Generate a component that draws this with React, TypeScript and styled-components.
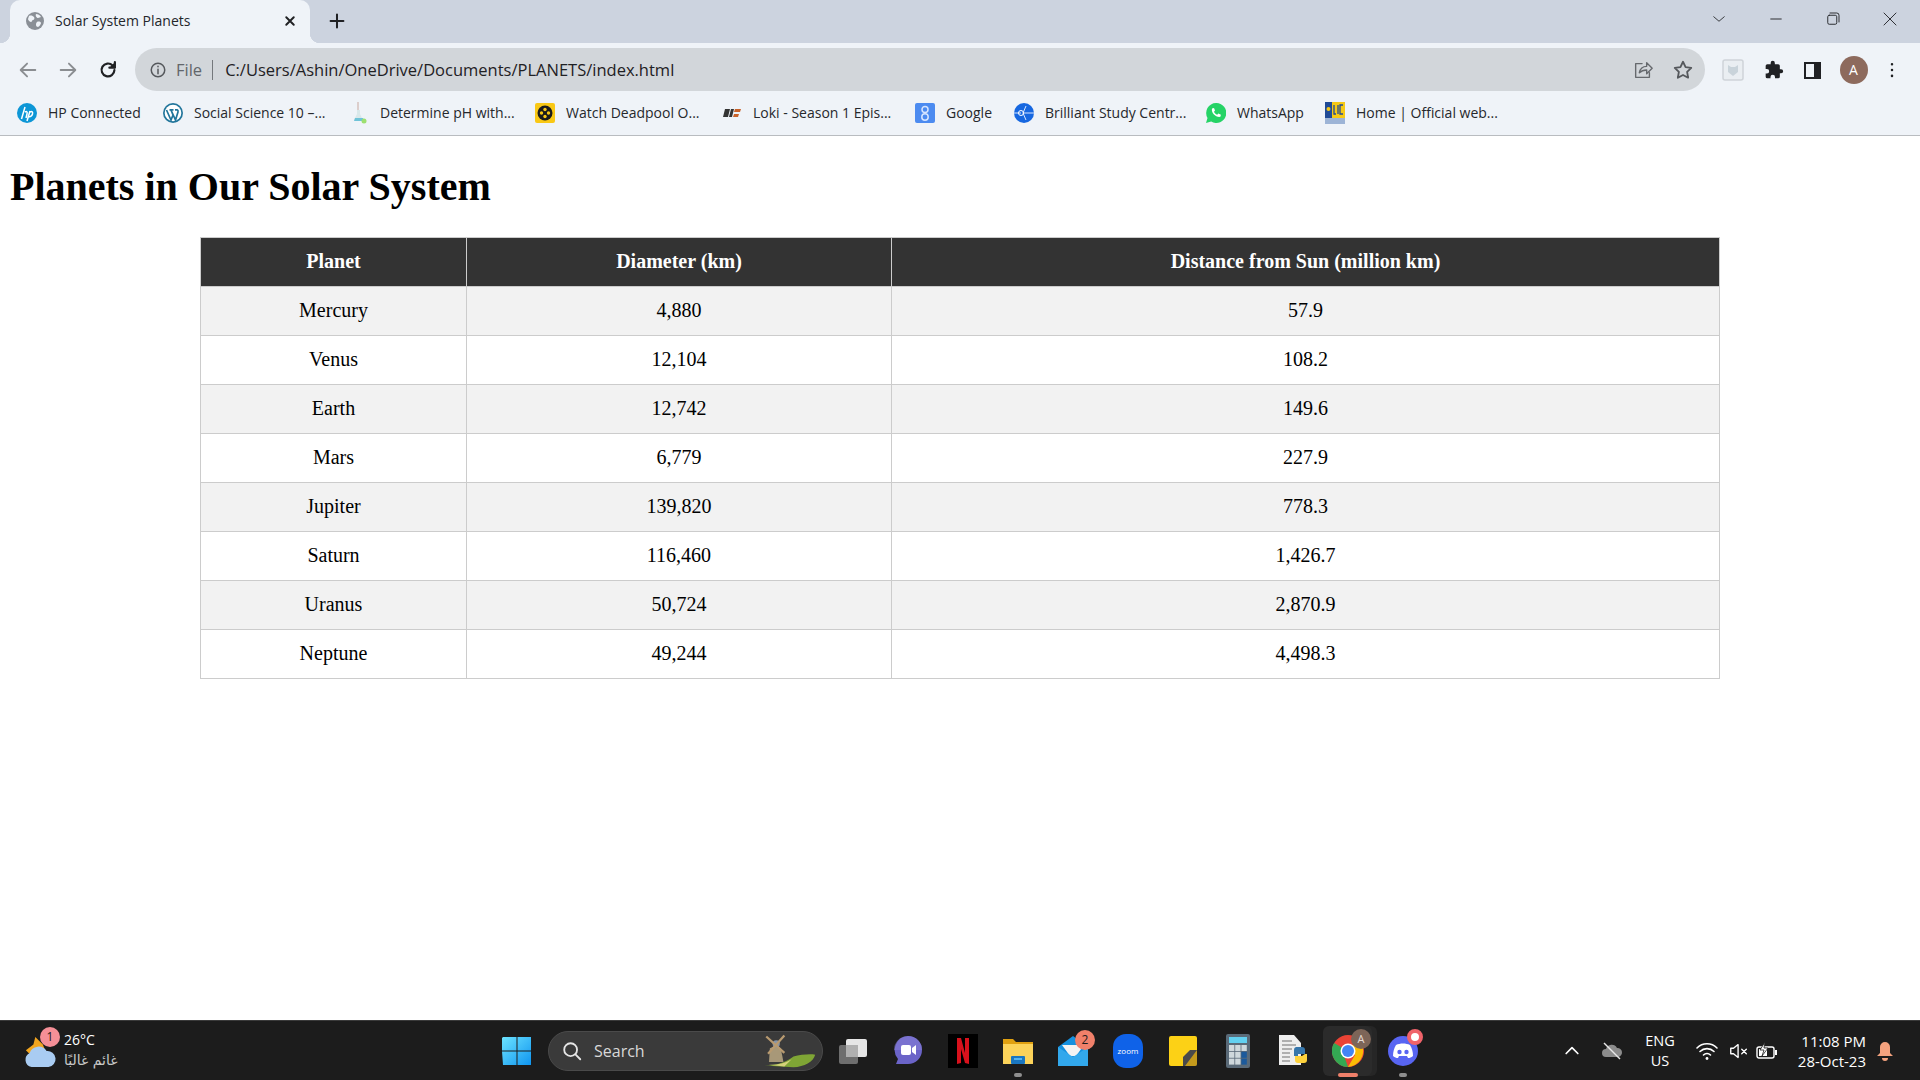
import React from "react";
import styled, { createGlobalStyle } from "styled-components";

const GlobalStyle = createGlobalStyle`
	html, body {
		margin: 0;
		padding: 0;
		background: #ffffff;
	}
`;

const uiFont = `"Open Sans", "Noto Sans", sans-serif`;

const Page = styled.div`
	width: 1920px;
	height: 1080px;
	display: flex;
	flex-direction: column;
	overflow: hidden;
	font-family: ${uiFont};
`;

const TabStrip = styled.div`
	height: 43px;
	flex: none;
	background: #ccd3df;
	display: flex;
	align-items: flex-end;
	padding-left: 10px;
`;

const Tab = styled.div`
	position: relative;
	width: 300px;
	height: 43px;
	box-sizing: border-box;
	background: #eff3f8;
	border-radius: 10px 10px 0 0;
	display: flex;
	align-items: center;
	padding: 0 11px 2px 16px;
	gap: 11px;
	font-size: 14px;
	color: #23262b;

	&::before,
	&::after {
		content: "";
		position: absolute;
		bottom: 0;
		width: 10px;
		height: 10px;
	}

	&::before {
		left: -10px;
		background: radial-gradient(circle at 0 0, transparent 10px, #eff3f8 10.5px);
	}

	&::after {
		right: -10px;
		background: radial-gradient(circle at 100% 0, transparent 10px, #eff3f8 10.5px);
	}
`;

const TabTitle = styled.span`
	flex: 1;
	white-space: nowrap;
`;

const NewTab = styled.div`
	width: 54px;
	height: 43px;
	display: flex;
	align-items: center;
	justify-content: center;
	padding-bottom: 2px;
	box-sizing: border-box;
`;

const WindowControls = styled.div`
	margin-left: auto;
	height: 43px;
	display: flex;
	align-items: center;
	padding: 0 2px 5px 0;
	box-sizing: border-box;
`;

const WindowButton = styled.div<{ $w: number }>`
	width: ${({ $w }) => $w}px;
	display: flex;
	justify-content: center;
`;

const Toolbar = styled.div`
	height: 48px;
	flex: none;
	background: #eff3f8;
	display: flex;
	align-items: flex-start;
	padding-top: 5px;
	box-sizing: border-box;
`;

const NavGroup = styled.div`
	width: 135px;
	height: 43px;
	flex: none;
	display: flex;
	align-items: center;
	padding-left: 8px;
	box-sizing: border-box;
`;

const NavButton = styled.div`
	width: 40px;
	display: flex;
	justify-content: center;
`;

const AddressPill = styled.div`
	width: 1570px;
	height: 43px;
	flex: none;
	background: #d2d6da;
	border-radius: 22px;
	display: flex;
	align-items: center;
	padding: 0 11px 0 14px;
	box-sizing: border-box;
	font-size: 16.5px;
	color: #1f2124;
`;

const FileLabel = styled.span`
	color: #62666b;
	margin-left: 9px;
	padding-right: 10px;
	border-right: 1px solid #74787c;
	line-height: 20px;
`;

const Url = styled.span`
	margin-left: 12px;
	flex: 1;
	white-space: nowrap;
`;

const PillIcons = styled.div`
	display: flex;
	align-items: center;
	gap: 18px;
`;

const ExtensionIcons = styled.div`
	flex: 1;
	height: 43px;
	display: flex;
	align-items: center;
	padding-left: 17px;
	gap: 19.5px;
`;

const Avatar = styled.div`
	width: 28px;
	height: 28px;
	margin-left: -3px;
	border-radius: 50%;
	background: #8d6a5d;
	color: #ffffff;
	font-size: 14px;
	display: flex;
	align-items: center;
	justify-content: center;
`;

const MenuDots = styled.div`
	display: flex;
	margin-left: -5px;
`;

const BookmarkBar = styled.div`
	height: 45px;
	flex: none;
	background: #eff3f8;
	border-bottom: 1px solid #b9bcc0;
	box-sizing: border-box;
	display: flex;
	align-items: center;
	padding: 0 0 1px 17px;
	font-size: 14px;
	color: #26282c;
`;

const Bookmark = styled.div<{ $w: number }>`
	width: ${({ $w }) => $w}px;
	flex: none;
	display: flex;
	align-items: center;
	gap: 11px;
	white-space: nowrap;
`;

const Content = styled.main`
	flex: 1;
	padding: 28px 10px 0;
	background: #ffffff;
	font-family: "Liberation Serif", "Times New Roman", serif;
	color: #000000;
`;

const Heading = styled.h1`
	margin: 0 0 27px;
	font-size: 40px;
	line-height: 46px;
	font-weight: 700;
`;

const PlanetTable = styled.table`
	width: 1519px;
	margin: 0 0 0 190px;
	border-collapse: collapse;
	table-layout: fixed;
	font-size: 20px;
`;

const Column = styled.col<{ $w: number }>`
	width: ${({ $w }) => $w}px;
`;

const HeadCell = styled.th`
	height: 49px;
	padding: 0 0 2px;
	background: #333333;
	color: #ffffff;
	border: 1px solid #cccccc;
	text-align: center;
	font-weight: 700;
	box-sizing: border-box;
`;

const BodyRow = styled.tr`
	&:nth-child(odd) {
		background: #f2f2f2;
	}
`;

const BodyCell = styled.td`
	height: 49px;
	padding: 0 0 2px;
	border: 1px solid #cccccc;
	text-align: center;
	box-sizing: border-box;
`;

const Taskbar = styled.footer`
	height: 60px;
	flex: none;
	box-sizing: border-box;
	background: #1c1c1c;
	border-top: 1px solid #3a3a3a;
	display: flex;
	align-items: center;
	color: #ffffff;
`;

const Weather = styled.div`
	width: 489px;
	flex: none;
	display: flex;
	align-items: center;
	padding-left: 22px;
	gap: 4px;
	box-sizing: border-box;
`;

const WeatherIcon = styled.div`
	position: relative;
	width: 38px;
	height: 44px;
`;

const Badge = styled.div<{ $bg: string; $size: number }>`
	position: absolute;
	width: ${({ $size }) => $size}px;
	height: ${({ $size }) => $size}px;
	border-radius: 50%;
	background: ${({ $bg }) => $bg};
	color: #1c1c1c;
	font-size: 12px;
	line-height: ${({ $size }) => $size}px;
	text-align: center;
	top: -2px;
	right: 0;
`;

const WeatherText = styled.div`
	font-size: 14px;
	line-height: 20px;
	padding-bottom: 2px;
`;

const WeatherSub = styled.div`
	color: #c8c8c8;
	font-family: "DejaVu Sans", sans-serif;
	font-size: 14px;
`;

const TaskSlot = styled.div`
	position: relative;
	width: 55px;
	height: 59px;
	flex: none;
	display: flex;
	align-items: center;
	justify-content: center;
`;

const ActiveBack = styled.div`
	position: absolute;
	top: 5px;
	bottom: 4px;
	left: 3px;
	right: 3px;
	border-radius: 6px;
	background: #2b2b2b;
	box-shadow: 5px 0 0 #262626;
`;

const RunDot = styled.div<{ $wide?: boolean }>`
	position: absolute;
	bottom: 3px;
	left: 50%;
	transform: translateX(-50%);
	height: 4px;
	border-radius: 2px;
	width: ${({ $wide }) => ($wide ? 20 : 8)}px;
	background: ${({ $wide }) => ($wide ? "#f0806a" : "#8f8f8f")};
`;

const SearchBox = styled.div`
	width: 275px;
	height: 40px;
	flex: none;
	box-sizing: border-box;
	margin: 0 2px 0 4px;
	background: #3a3a3a;
	border: 1px solid #4a4a4a;
	border-radius: 20px;
	display: flex;
	align-items: center;
	padding: 0 5px 0 12px;
	gap: 11px;
	font-size: 16px;
	color: #d8d8d8;
`;

const SearchLabel = styled.span`
	flex: 1;
`;

const Tray = styled.div`
	margin-left: auto;
	padding-right: 16px;
	display: flex;
	align-items: center;
	height: 59px;
`;

const TrayIcon = styled.div<{ $w: number }>`
	width: ${({ $w }) => $w}px;
	flex: none;
	display: flex;
	justify-content: center;
`;

const Lang = styled.div`
	width: 58px;
	text-align: center;
	font-size: 14.5px;
	line-height: 20px;
`;

const Clock = styled.div`
	width: 84px;
	text-align: right;
	font-size: 15px;
	line-height: 20px;
	white-space: nowrap;
`;

const ProfileOverlay = styled.div`
	position: absolute;
	top: 8px;
	right: 4px;
	width: 20px;
	height: 20px;
	border-radius: 50%;
	background: #7d6558;
	color: #e6dcd6;
	font-size: 11px;
	line-height: 20px;
	text-align: center;
`;

const ChromeWrap = styled.div`
	position: relative;
	display: flex;
`;

const MailBadge = styled(Badge)`
	top: 9px;
	right: 5px;
`;

const DiscordBadge = styled(Badge)`
	top: 8px;
	right: 7px;
	border: 4px solid #f0636a;
	background: #ffffff;
	box-sizing: border-box;
`;

const WeatherArtBox = styled.svg`
	position: absolute;
	left: 0;
	top: 8px;
`;

const planets = [
	["Mercury", "4,880", "57.9"],
	["Venus", "12,104", "108.2"],
	["Earth", "12,742", "149.6"],
	["Mars", "6,779", "227.9"],
	["Jupiter", "139,820", "778.3"],
	["Saturn", "116,460", "1,426.7"],
	["Uranus", "50,724", "2,870.9"],
	["Neptune", "49,244", "4,498.3"],
];

const Stroke: React.FC<{ size?: number; color?: string; width?: number; children: React.ReactNode }> = ({
	size = 20,
	color = "#5f6368",
	width = 2,
	children,
}) => (
	<svg width={size} height={size} viewBox="0 0 24 24" fill="none" stroke={color} strokeWidth={width} strokeLinecap="round" strokeLinejoin="round">
		{children}
	</svg>
);

const GlobeIcon = () => (
	<svg width="18" height="18" viewBox="0 0 18 18">
		<circle cx="9" cy="9" r="9" fill="#8a8f96" />
		<path d="M3 4c2-1 4 0 5 1s0 3-1 3-1 2-2 2-3-2-3-3zM11 10c2-1 4 0 4 1s-2 4-3 4-2-1-2-2 0-2 1-3zM10 2c2 0 4 1 5 3l-3 1c-1 0-3-2-2-4z" fill="#eff3f8" />
	</svg>
);

const Puzzle = () => (
	<svg width="20" height="20" viewBox="0 0 24 24" fill="#202124">
		<path d="M20.5 11H19V7a2 2 0 0 0-2-2h-4V3.500a2.500 2.500 0 0 0-5 0V5H4a2 2 0 0 0-2 2v3.800h1.500a2.700 2.700 0 0 1 0 5.400H2V20a2 2 0 0 0 2 2h3.800v-1.500a2.700 2.700 0 0 1 5.400 0V22H17a2 2 0 0 0 2-2v-4h1.500a2.500 2.500 0 0 0 0-5z" />
	</svg>
);

const HpLogo = () => (
	<svg width="20" height="20" viewBox="0 0 20 20">
		<circle cx="10" cy="10" r="10" fill="#0d96d6" />
		<path d="M8 4 4.500 16M8 9c2-1 2.500 0 2 2l-1 4M13 8l-3 10M13 9c2-1 3 0 2.500 2s-2 3-4 2.500" stroke="#fff" strokeWidth="1.500" fill="none" />
	</svg>
);

const WpLogo = () => (
	<svg width="20" height="20" viewBox="0 0 20 20">
		<circle cx="10" cy="10" r="10" fill="#21759b" />
		<circle cx="10" cy="10" r="8.300" fill="#ffffff" />
		<path d="M3.500 7 8 17l2-5-2-5M8 7l4.500 10 2.500-8c.4-1.200-.3-2-1-2.500M6.500 6.800h4M12 6.800h2" stroke="#21759b" strokeWidth="1.700" fill="none" />
	</svg>
);

const FlaskLogo = () => (
	<svg width="20" height="24" viewBox="0 0 20 24">
		<path d="M9 1v8" stroke="#c9a9a0" strokeWidth="1" />
		<path d="M8 9h3v4l3 6H5l3-6z" fill="#d9e8ea" />
		<path d="M6 17h8l1 3H5z" fill="#6fc3d8" />
		<circle cx="15" cy="20" r="2.500" fill="#9de070" />
	</svg>
);

const ReelLogo = () => (
	<svg width="20" height="20" viewBox="0 0 20 20">
		<rect width="20" height="20" rx="2" fill="#f9c815" />
		<circle cx="10" cy="10" r="7.500" fill="#1b1b1b" />
		<circle cx="10" cy="6.500" r="1.700" fill="#f9c815" />
		<circle cx="10" cy="13.500" r="1.700" fill="#f9c815" />
		<circle cx="6.500" cy="10" r="1.700" fill="#f9c815" />
		<circle cx="13.500" cy="10" r="1.700" fill="#f9c815" />
	</svg>
);

const LokiLogo = () => (
	<svg width="20" height="12" viewBox="0 0 20 12">
		<path d="M3 2h5L6 10H1zM9 2h3l-2 8H7z" fill="#333" />
		<path d="M13 2h6l-1 3h-6zM12 7h5l-1 3h-5z" fill="#c8622a" />
	</svg>
);

const GoogleBm = () => (
	<svg width="20" height="20" viewBox="0 0 20 20">
		<rect width="20" height="20" rx="2" fill="#4c8bf0" />
		<circle cx="10" cy="6.500" r="3" fill="none" stroke="#d6e5ff" strokeWidth="1.500" />
		<circle cx="10" cy="14" r="3.200" fill="none" stroke="#d6e5ff" strokeWidth="1.500" />
	</svg>
);

const BrilliantLogo = () => (
	<svg width="20" height="20" viewBox="0 0 20 20">
		<circle cx="10" cy="10" r="10" fill="#1667e0" />
		<path d="M0 10h7M12 3l-3 7 3 7M9 10h11" stroke="#d7e6ff" strokeWidth="1" fill="none" />
		<circle cx="7" cy="10" r="2.500" fill="none" stroke="#fff" strokeWidth="1" />
	</svg>
);

const WhatsAppLogo = () => (
	<svg width="20" height="20" viewBox="0 0 20 20">
		<path d="M10 0a10 10 0 0 0-8.500 15L0 20l5.200-1.400A10 10 0 1 0 10 0z" fill="#25d366" />
		<path d="M6 5.500 8 5l1 2.500-1 1.200c.6 1.400 1.600 2.400 3.200 3.100l1.200-1.200 2.500 1.200-.5 2c-4.500.8-9.500-4-8.400-8.300z" fill="#fff" />
	</svg>
);

const LicLogo = () => (
	<svg width="20" height="22" viewBox="0 0 20 22">
		<rect width="7" height="16" fill="#204a96" />
		<rect x="7" width="13" height="16" fill="#f6c915" />
		<rect y="16" width="20" height="6" fill="#9db4d6" />
		<path d="M9 3v9h2M13 3v9M18 3h-3v9h3" stroke="#204a96" strokeWidth="1.300" fill="none" />
		<circle cx="3.500" cy="7" r="2" fill="#f6c915" />
	</svg>
);

const WindowsLogo = () => (
	<svg width="30" height="30" viewBox="0 0 30 30">
		<defs>
			<linearGradient id="winGrad" x1="0" y1="0" x2="1" y2="1">
				<stop offset="0" stopColor="#6ce3ff" />
				<stop offset="1" stopColor="#0f95f0" />
			</linearGradient>
		</defs>
		<path d="M1 1h13.500v13.500H0V2zM15.500 1H29v13.500H15.500zM0 15.500h14.500V29H1zM15.500 15.500H29V29H15.500z" fill="url(#winGrad)" />
	</svg>
);

const Windmill = () => (
	<svg width="58" height="36" viewBox="0 0 64 38">
		<path d="M6 35c14 0 24-4 32-10 8-2 18-3 24-2-2 8-12 13-24 14z" fill="#7fa535" />
		<path d="M8 34c10 1 20-1 28-6l-8 8z" fill="#d6d17a" />
		<path d="M12 16l7-3 5 3 3 15H11z" fill="#a89878" />
		<circle cx="19" cy="11" r="4" fill="#8795a8" />
		<path d="M8 3l20 18M28 2 10 22" stroke="#b89a70" strokeWidth="2.500" />
	</svg>
);

const TaskViewIcon = () => (
	<svg width="30" height="30" viewBox="0 0 30 30">
		<rect x="1" y="9" width="19" height="19" rx="2" fill="#6e6e6e" />
		<rect x="8" y="3" width="21" height="18" rx="2" fill="#e6e6e6" />
		<rect x="8" y="9" width="12" height="12" fill="#b0b0b0" />
	</svg>
);

const MeetIcon = () => (
	<svg width="30" height="32" viewBox="0 0 30 32">
		<path d="M15 1a14 14 0 0 1 0 28H3l2-5A14 14 0 0 1 15 1z" fill="#6b64c8" />
		<path d="M15 1a14 14 0 0 1 14 14H1A14 14 0 0 1 15 1z" fill="#8a80d8" opacity="0.5" />
		<rect x="8" y="10" width="10" height="10" rx="2" fill="#fff" />
		<path d="M19 13l4-3v10l-4-3z" fill="#fff" />
	</svg>
);

const NetflixIcon = () => (
	<svg width="30" height="34" viewBox="0 0 30 34">
		<rect width="30" height="34" fill="#000" />
		<path d="M9 4h4l4 15V4h4v26l-4-1-4-14v14l-4 1z" fill="#d8111c" />
	</svg>
);

const FolderIcon = () => (
	<svg width="30" height="30" viewBox="0 0 30 30">
		<path d="M0 3h10l3 3h17v5H0z" fill="#e0a010" />
		<path d="M0 8h30v20H0z" fill="#fcd35a" />
		<rect x="8" y="20" width="14" height="8" rx="1" fill="#1a76c0" />
		<rect x="11" y="22" width="8" height="2" fill="#55b4f0" />
	</svg>
);

const MailIcon = () => (
	<svg width="30" height="32" viewBox="0 0 30 32">
		<path d="M0 12 15 1l15 11v19H0z" fill="#1490df" />
		<path d="M4 10h22l-8 11h-6z" fill="#f3f3f3" />
		<path d="M0 12l15 10 15-10v19H0z" fill="#32a8ec" />
	</svg>
);

const ZoomIcon = () => (
	<svg width="30" height="34" viewBox="0 0 30 34">
		<rect width="30" height="34" rx="13" fill="#0f62e8" />
		<text x="15" y="20" fontSize="8" textAnchor="middle" fill="#fff" fontFamily="Open Sans, sans-serif">zoom</text>
	</svg>
);

const StickyIcon = () => (
	<svg width="28" height="30" viewBox="0 0 28 30">
		<path d="M2 0h24a2 2 0 0 1 2 2v14L14 30H2a2 2 0 0 1-2-2V2a2 2 0 0 1 2-2z" fill="#fcd116" />
		<path d="M28 14v14a2 2 0 0 1-2 2H14v-9l7-7z" fill="#4a4a4a" />
		<path d="M28 14v14a2 2 0 0 1-2 2H16z" fill="#c49a1c" />
	</svg>
);

const CalcIcon = () => (
	<svg width="24" height="34" viewBox="0 0 24 34">
		<rect width="24" height="34" rx="2" fill="#5a6a78" />
		<rect x="3" y="3" width="18" height="6" fill="#62d0f0" />
		{[0, 1, 2].map((r) =>
			[0, 1, 2].map((c) => (
				<rect key={`${r}${c}`} x={3 + c * 6.2} y={11 + r * 6.8} width="5.400" height="6" fill={c === 2 && r > 0 ? "#1c5a9c" : "#cfd8dc"} />
			))
		)}
	</svg>
);

const PyFileIcon = () => (
	<svg width="30" height="32" viewBox="0 0 30 32">
		<path d="M1 0h15l7 8v22H1z" fill="#eeeeee" />
		<path d="M4 6h10M4 10h14M4 14h10M4 18h8M4 22h8M4 26h8" stroke="#9a9a9a" strokeWidth="1.500" />
		<path d="M18 12h6a3 3 0 0 1 3 3v4h-7v2h-4v-6a3 3 0 0 1 2-3z" fill="#3676ab" />
		<path d="M27 19h2v6a3 3 0 0 1-3 3h-6a3 3 0 0 1-3-3v-4h7z" fill="#fdd23c" />
	</svg>
);

const ChromeIcon = () => (
	<svg width="32" height="32" viewBox="0 0 32 32">
		<circle cx="16" cy="16" r="16" fill="#ea4335" />
		<path d="M16 16 2.100 24A16 16 0 0 1 2.100 8z" fill="#34a853" />
		<path d="M16 32A16 16 0 0 1 2.100 24L9 12z" fill="#34a853" />
		<path d="M16 32 23 20 16 10h14a16 16 0 0 1-14 22z" fill="#fbbc05" />
		<circle cx="16" cy="16" r="7.500" fill="#fff" />
		<circle cx="16" cy="16" r="6" fill="#4285f4" />
	</svg>
);

const DiscordIcon = () => (
	<svg width="30" height="30" viewBox="0 0 30 30">
		<circle cx="15" cy="15" r="15" fill="#5865f2" />
		<path d="M8 9c4-2 10-2 14 0 2 3 3 7 3 11-2 1.500-3 2-5 2l-1-2h-8l-1 2c-2 0-3-.5-5-2 0-4 1-8 3-11z" fill="#fff" />
		<circle cx="11.500" cy="16" r="2.200" fill="#5865f2" />
		<circle cx="18.500" cy="16" r="2.200" fill="#5865f2" />
	</svg>
);

const WeatherArt = () => (
	<WeatherArtBox width="36" height="32" viewBox="0 0 38 34">
		<path d="M4 14 12 8l2-8 8 8 4 10H8z" fill="#f2a51f" />
		<path d="M10 32a8 8 0 0 1-2-15 10 10 0 0 1 18-2 8.500 8.500 0 0 1 2 17z" fill="#a9ccf2" />
	</WeatherArtBox>
);

const App: React.FC = () => (
	<Page>
		<GlobalStyle />
		<TabStrip>
			<Tab>
				<GlobeIcon />
				<TabTitle>Solar System Planets</TabTitle>
				<Stroke size={18} color="#202124" width={2.6}>
					<path d="M7 7l10 10M17 7 7 17" />
				</Stroke>
			</Tab>
			<NewTab>
				<Stroke size={22} color="#202124" width={2.2}>
					<path d="M12 5v14M5 12h14" />
				</Stroke>
			</NewTab>
			<WindowControls>
				<WindowButton $w={57}>
					<Stroke size={18} color="#2a2c30" width={1.2}>
						<path d="m5 9 7 6 7-6" />
					</Stroke>
				</WindowButton>
				<WindowButton $w={57}>
					<Stroke size={18} color="#2a2c30" width={1.3}>
						<path d="M5 12h14" />
					</Stroke>
				</WindowButton>
				<WindowButton $w={57}>
					<Stroke size={18} color="#2a2c30" width={1.3}>
						<rect x="5" y="7" width="12" height="12" rx="2" />
						<path d="M8 4h9a3 3 0 0 1 3 3v9" />
					</Stroke>
				</WindowButton>
				<WindowButton $w={57}>
					<Stroke size={18} color="#2a2c30" width={1.3}>
						<path d="m4 4 16 16M20 4 4 20" />
					</Stroke>
				</WindowButton>
			</WindowControls>
		</TabStrip>

		<Toolbar>
			<NavGroup>
				<NavButton>
					<Stroke size={22} color="#8a8d91">
						<path d="M20 12H5M11 5l-7 7 7 7" />
					</Stroke>
				</NavButton>
				<NavButton>
					<Stroke size={22} color="#8a8d91">
						<path d="M4 12h15M13 5l7 7-7 7" />
					</Stroke>
				</NavButton>
				<NavButton>
					<Stroke size={22} color="#202124" width={2.4}>
						<path d="M19 12a7 7 0 1 1-2-5l2 2" />
						<path d="M19.500 3.500V9.500H13.500" fill="#202124" />
					</Stroke>
				</NavButton>
			</NavGroup>
			<AddressPill>
				<Stroke size={18} color="#55585c" width={2}>
					<circle cx="12" cy="12" r="9" />
					<path d="M12 11v6M12 7v.5" />
				</Stroke>
				<FileLabel>File</FileLabel>
				<Url>C:/Users/Ashin/OneDrive/Documents/PLANETS/index.html</Url>
				<PillIcons>
					<Stroke size={22} color="#66696d" width={1.5}>
						<path d="M11 5H4v15h15v-5" />
						<path d="M8 15c1-5 4-7 8-7V4l6 6-6 6v-4c-4 0-6 1-8 3z" />
					</Stroke>
					<Stroke size={22} color="#55585c" width={2}>
						<path d="m12 3 2.800 5.800 6.200.9-4.500 4.400 1.100 6.300L12 17.400l-5.600 3 1.100-6.300L3 9.700l6.200-.9z" />
					</Stroke>
				</PillIcons>
			</AddressPill>
			<ExtensionIcons>
				<svg width="22" height="22" viewBox="0 0 22 22">
					<rect x="1" y="1" width="20" height="20" rx="2" fill="#eaeef2" stroke="#cfd4d9" strokeWidth="1.500" />
					<path d="M6 6l3 2h4l3-2v7l-5 4-5-4z" fill="#c9d3da" />
				</svg>
				<Puzzle />
				<svg width="20" height="20" viewBox="0 0 20 20">
					<rect x="1" y="2" width="17" height="17" fill="#202124" />
					<rect x="3" y="4" width="8" height="13" fill="#eff3f8" />
				</svg>
				<Avatar>A</Avatar>
				<MenuDots>
					<Stroke size={20} color="#202124" width={3}>
						<path d="M12 5v.1M12 12v.1M12 19v.1" />
					</Stroke>
				</MenuDots>
			</ExtensionIcons>
		</Toolbar>

		<BookmarkBar>
			<Bookmark $w={146}><HpLogo />HP Connected</Bookmark>
			<Bookmark $w={186}><WpLogo />Social Science 10 –...</Bookmark>
			<Bookmark $w={186}><FlaskLogo />Determine pH with...</Bookmark>
			<Bookmark $w={187}><ReelLogo />Watch Deadpool O...</Bookmark>
			<Bookmark $w={193}><LokiLogo />Loki - Season 1 Epis...</Bookmark>
			<Bookmark $w={99}><GoogleBm />Google</Bookmark>
			<Bookmark $w={192}><BrilliantLogo />Brilliant Study Centr...</Bookmark>
			<Bookmark $w={119}><WhatsAppLogo />WhatsApp</Bookmark>
			<Bookmark $w={180}><LicLogo />Home | Official web...</Bookmark>
		</BookmarkBar>

		<Content>
			<Heading>Planets in Our Solar System</Heading>
			<PlanetTable>
				<colgroup>
					<Column $w={266} />
					<Column $w={425} />
					<Column $w={828} />
				</colgroup>
				<thead>
					<tr>
						<HeadCell>Planet</HeadCell>
						<HeadCell>Diameter (km)</HeadCell>
						<HeadCell>Distance from Sun (million km)</HeadCell>
					</tr>
				</thead>
				<tbody>
					{planets.map((row) => (
						<BodyRow key={row[0]}>
							{row.map((cell) => (
								<BodyCell key={cell}>{cell}</BodyCell>
							))}
						</BodyRow>
					))}
				</tbody>
			</PlanetTable>
		</Content>

		<Taskbar>
			<Weather>
				<WeatherIcon>
					<WeatherArt />
					<Badge $bg="#f58f97" $size={20}>1</Badge>
				</WeatherIcon>
				<WeatherText>
					<div>26°C</div>
					<WeatherSub>غائم غالبًا</WeatherSub>
				</WeatherText>
			</Weather>
			<TaskSlot><WindowsLogo /></TaskSlot>
			<SearchBox>
				<Stroke size={22} color="#e6e6e6" width={2}>
					<circle cx="10.500" cy="10.500" r="7" />
					<path d="m16 16 5 5" />
				</Stroke>
				<SearchLabel>Search</SearchLabel>
				<Windmill />
			</SearchBox>
			<TaskSlot><TaskViewIcon /></TaskSlot>
			<TaskSlot><MeetIcon /></TaskSlot>
			<TaskSlot><NetflixIcon /></TaskSlot>
			<TaskSlot><FolderIcon /><RunDot /></TaskSlot>
			<TaskSlot>
				<MailIcon />
				<MailBadge $bg="#f0806a" $size={20}>2</MailBadge>
			</TaskSlot>
			<TaskSlot><ZoomIcon /></TaskSlot>
			<TaskSlot><StickyIcon /></TaskSlot>
			<TaskSlot><CalcIcon /></TaskSlot>
			<TaskSlot><PyFileIcon /></TaskSlot>
			<TaskSlot>
				<ActiveBack />
				<ChromeWrap><ChromeIcon /></ChromeWrap>
				<ProfileOverlay>A</ProfileOverlay>
				<RunDot $wide />
			</TaskSlot>
			<TaskSlot>
				<DiscordIcon />
				<DiscordBadge $bg="#ffffff" $size={16} />
				<RunDot />
			</TaskSlot>
			<Tray>
				<TrayIcon $w={40}>
					<Stroke size={20} color="#ffffff" width={2}>
						<path d="m5 15 7-7 7 7" />
					</Stroke>
				</TrayIcon>
				<TrayIcon $w={39}>
					<svg width="22" height="20" viewBox="0 0 22 20">
						<path d="M5 16a4 4 0 0 1 0-8 6 6 0 0 1 11-1 4.500 4.500 0 0 1 1 9z" fill="#8c8c8c" />
						<path d="m3 2 16 16" stroke="#e8e8e8" strokeWidth="1.500" />
					</svg>
				</TrayIcon>
				<Lang>ENG<br />US</Lang>
				<TrayIcon $w={36}>
					<Stroke size={24} color="#ffffff" width={1.6}>
						<path d="M2 9a14 14 0 0 1 20 0M5 12.500a10 10 0 0 1 14 0M8.500 16a5 5 0 0 1 7 0" />
						<path d="M12 19.500v.1" strokeWidth={2.8} />
					</Stroke>
				</TrayIcon>
				<TrayIcon $w={27}>
					<Stroke size={22} color="#ffffff" width={1.5}>
						<path d="M3 9v6h3l5 4V5L6 9zM15 10l5 5M20 10l-5 5" />
					</Stroke>
				</TrayIcon>
				<TrayIcon $w={30}>
					<svg width="22" height="18" viewBox="0 0 22 18">
						<rect x="1" y="5" width="17" height="11" rx="2" fill="none" stroke="#fff" strokeWidth="1.400" />
						<rect x="3" y="7" width="8" height="7" fill="#fff" />
						<path d="M19 8h2v5h-2z" fill="#fff" />
						<path d="M9 0 4 8h4l-2 6 6-8H8z" fill="#fff" stroke="#1c1c1c" strokeWidth="0.800" />
					</svg>
				</TrayIcon>
				<Clock>11:08 PM<br />28-Oct-23</Clock>
				<TrayIcon $w={38}>
					<svg width="18" height="20" viewBox="0 0 18 20">
						<path d="M9 1a5 5 0 0 1 5 5v6l3 3H1l3-3V6a5 5 0 0 1 5-5z" fill="#f4a27e" />
						<path d="M6 17h6a3 3 0 0 1-6 0z" fill="#f4a27e" />
					</svg>
				</TrayIcon>
			</Tray>
		</Taskbar>
	</Page>
);

export default App;
